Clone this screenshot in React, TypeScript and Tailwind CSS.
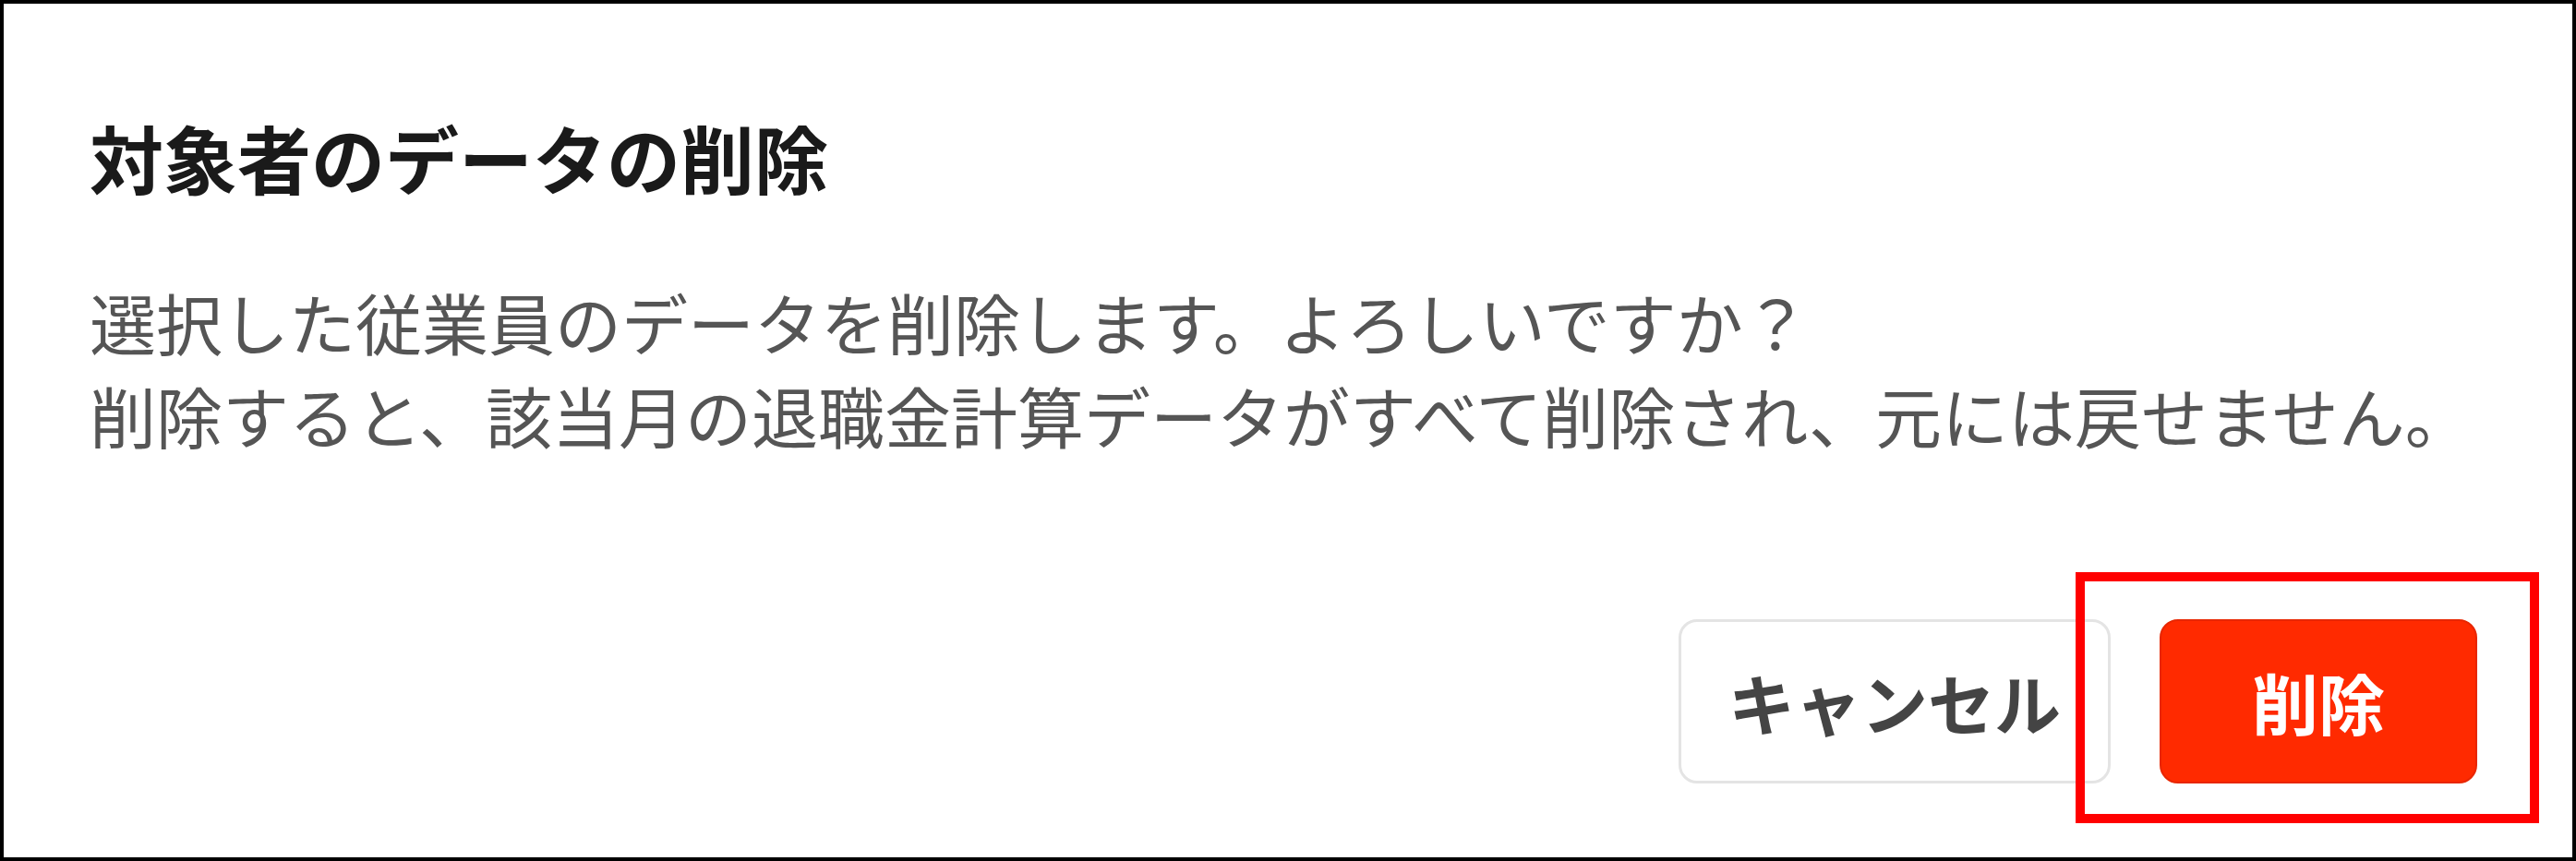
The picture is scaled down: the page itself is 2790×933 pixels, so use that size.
import React from "react";

export default function App() {
  return (
    <div
      className="relative flex h-[933px] w-[2790px] flex-col border-4 border-black bg-white pl-[93px] pr-[103px] pt-[105px]"
      style={{ fontFamily: '"Noto Sans CJK JP", "Noto Sans", sans-serif' }}
    >
      <h1 className="text-[80px] font-bold leading-[120px] text-[#1a1a1a]">
        対象者のデータの削除
      </h1>
      <div className="mt-[68px] text-[72px] leading-[101px] text-[#555555]">
        <p>選択した従業員のデータを削除します。よろしいですか？</p>
        <p>削除すると、該当月の退職金計算データがすべて削除され、元には戻せません。</p>
      </div>
      <div className="mt-[172px] flex justify-end gap-[53px]">
        <button className="flex h-[178px] w-[468px] items-center justify-center rounded-[20px] border-[3px] border-[#e4e4e4] bg-white text-[72px] font-bold text-[#444444]">
          キャンセル
        </button>
        <button className="flex h-[178px] w-[344px] items-center justify-center rounded-[20px] border-2 border-[#e82600] bg-[#ff2a00] text-[72px] font-bold text-white">
          削除
        </button>
      </div>
      <div className="pointer-events-none absolute left-[2244px] top-[616px] h-[272px] w-[502px] border-[10px] border-[#ff0000]" />
    </div>
  );
}
